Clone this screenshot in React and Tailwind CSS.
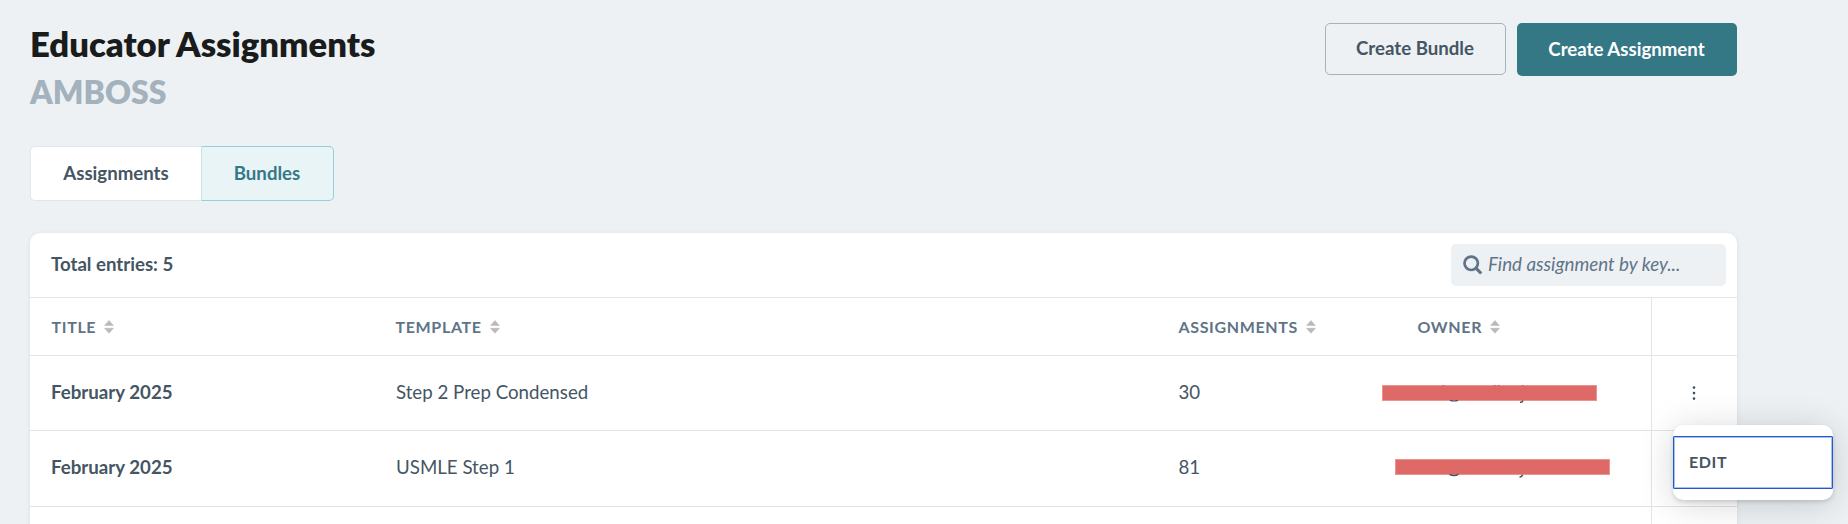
import React, { useState } from 'react';

const columns = ['Title', 'Template', 'Assignments', 'Owner'];

const bundles = [
  { id: 1, title: 'February 2025', template: 'Step 2 Prep Condensed', count: 30 },
  { id: 2, title: 'February 2025', template: 'USMLE Step 1', count: 81 },
];

const SortIcon = () => (
  <svg width="10" height="14" viewBox="0 0 10 14" fill="#bababa">
    <path d="M5 0.5 9.4 5.4H0.6Z" stroke="#bababa" strokeWidth="0.6" strokeLinejoin="round" />
    <path d="M5 13.2 9.4 8.3H0.6Z" stroke="#bababa" strokeWidth="0.6" strokeLinejoin="round" />
  </svg>
);

const SearchIcon = () => (
  <svg width="20" height="20" viewBox="0 0 20 20" fill="none" stroke="#607487" strokeWidth="2.7">
    <circle cx="8.2" cy="8.3" r="6.7" />
    <path d="M13 13.2 18.2 18.5" strokeWidth="3.2" />
  </svg>
);

const DotsIcon = () => (
  <svg width="4" height="16" viewBox="0 0 4 16" fill="#40515e">
    <circle cx="2" cy="2.6" r="1.3" />
    <circle cx="2" cy="8.1" r="1.3" />
    <circle cx="2" cy="13.6" r="1.3" />
  </svg>
);

// Redacted owner address, only the edges of a few letters stay visible
const RedactedOwner = ({ first }) => (
  <div className={first ? 'relative -left-[14px] w-[215px] h-4' : 'relative -left-px -top-[2px] w-[215px] h-4'}>
    <div className="h-full bg-[#df6966] border border-[#e89491]" />
    <svg className="absolute left-0 -top-1 overflow-visible" width="215" height="24" fill="none" stroke="#40515e">
      {first ? (
        <>
          <path d="M60.5 4.5h1.6M112 4.5h1.5M116 4.5h1.5M140 4.5h1.4" strokeWidth="0.8" opacity="0.7" />
          <path d="M68 19.4Q72 20.6 76 19.4" strokeWidth="1.2" />
          <path d="M138 21.2Q140.2 21.8 141 19.6" strokeWidth="1.4" />
        </>
      ) : (
        <>
          <path d="M54.5 19.4Q59 21.6 63.5 19.4" strokeWidth="1.3" />
          <path d="M124.5 22Q126.8 22.4 127.6 19.8" strokeWidth="1.5" />
        </>
      )}
    </svg>
  </div>
);

const HeaderBar = () => (
  <header className="flex justify-between">
    <div className="h-[94px]">
      <h1 className="text-[34.65px] leading-[41px] font-extrabold text-[#1a1c1c]">Educator Assignments</h1>
      <p className="mt-[7px] text-[32px] leading-[42px] font-extrabold text-[#a3b2bd]">AMBOSS</p>
    </div>
    <div className="flex items-start gap-[11px]">
      <button className="w-[181px] h-[52px] rounded-[5px] border border-[#a3b2bd] pb-px pr-px text-[18.65px] font-bold text-[#455563]">
        Create Bundle
      </button>
      <button className="w-[220px] h-[53px] rounded-[5px] bg-[#357885] pr-px text-[18.65px] font-bold text-white">
        Create Assignment
      </button>
    </div>
  </header>
);

const App = () => {
  const [search, setSearch] = useState('');
  const [tab, setTab] = useState('Bundles');

  return (
    <div className="relative w-[1848px] h-[524px] overflow-hidden bg-[#edf1f4] font-['Lato',sans-serif] text-[#455563]">
      <div className="ml-[30px] w-[1707px] pt-[23px]">
        <HeaderBar />

        <div className="mt-[29px] flex">
          {['Assignments', 'Bundles'].map((name) => (
            <button
              key={name}
              onClick={() => setTab(name)}
              className={
                tab === name
                  ? 'w-[133px] h-[55px] rounded-r-[5px] border border-[#8fd2dc] border-l-[#c4e6eb] bg-[#e8f4f6] pr-px text-[18.65px] font-bold text-[#357885]'
                  : 'w-[171px] h-[55px] rounded-l-[5px] border border-r-0 border-[#e0e6eb] bg-white text-[18.65px] font-bold'
              }
            >
              {name}
            </button>
          ))}
        </div>

        <section className="mt-8 h-[320px] rounded-t-[10px] bg-white shadow-[0_1px_5px_rgba(64,81,94,0.1)]">
          <div className="flex h-[64px] items-center justify-between pl-[21px] pr-[11px]">
            <span className="pb-[2px] text-[18.65px] leading-7 font-bold">Total entries: 5</span>
            <label className="flex h-[42px] w-[275px] items-center gap-[5px] rounded-[5px] bg-[#edf1f4] pl-3">
              <SearchIcon />
              <input
                value={search}
                onChange={(e) => setSearch(e.target.value)}
                placeholder="Find assignment by key..."
                className="w-[220px] bg-transparent pb-[2px] text-[18.8px] italic outline-none placeholder:text-[#607487]"
              />
            </label>
          </div>

          <table className="w-full table-fixed border-collapse text-left">
            <colgroup>
              <col className="w-[344px]" />
              <col className="w-[783px]" />
              <col className="w-[239px]" />
              <col className="w-[255px]" />
              <col className="w-[86px]" />
            </colgroup>
            <thead>
              <tr className="h-[58px] border-y border-[#e0e5e9]">
                {columns.map((name) => (
                  <th key={name} className="p-0 pl-[21.5px]">
                    <span className="flex items-center gap-2 text-[16px] font-bold uppercase tracking-[0.65px] text-[#607487]">
                      {name}
                      <SortIcon />
                    </span>
                  </th>
                ))}
                <th className="border-l border-[#e0e5e9]" />
              </tr>
            </thead>
            <tbody>
              {bundles.map((bundle, i) => (
                <tr key={bundle.id} className={i === 0 ? 'h-[75px] border-b border-[#dde5ea]' : 'h-[76px] border-b border-[#dde5ea]'}>
                  <td className="p-0 pb-[2px] pl-[21px] text-[18.7px] font-bold">{bundle.title}</td>
                  <td className="p-0 pb-[2px] pl-[22px] text-[18.7px]">{bundle.template}</td>
                  <td className="p-0 pb-[2px] pl-[21.5px] text-[18.7px]">{bundle.count}</td>
                  <td className="p-0"><RedactedOwner first={i === 0} /></td>
                  <td className="border-l border-[#e0e5e9] p-0">
                    <div className="flex justify-center">
                      <DotsIcon />
                    </div>
                  </td>
                </tr>
              ))}
              <tr className="h-[76px]">
                <td colSpan={4} />
                <td className="border-l border-[#e0e5e9]" />
              </tr>
            </tbody>
          </table>
        </section>
      </div>

      {/* Row actions menu */}
      <div className="absolute left-[1673px] top-[425px] h-[75px] w-[160px] rounded-[10px] bg-white py-[11px] shadow-[0_2px_4px_rgba(0,0,0,0.14),0_4px_36px_rgba(0,0,0,0.16)]">
        <button className="flex h-[53px] w-full items-center rounded-[1px] border border-[#1f5ad0] pb-[2px] pl-[15px] text-[16px] font-bold tracking-[0.6px] shadow-[inset_0_0_0_1px_rgba(36,96,204,0.4)]">
          EDIT
        </button>
      </div>
    </div>
  );
};

export default App;
